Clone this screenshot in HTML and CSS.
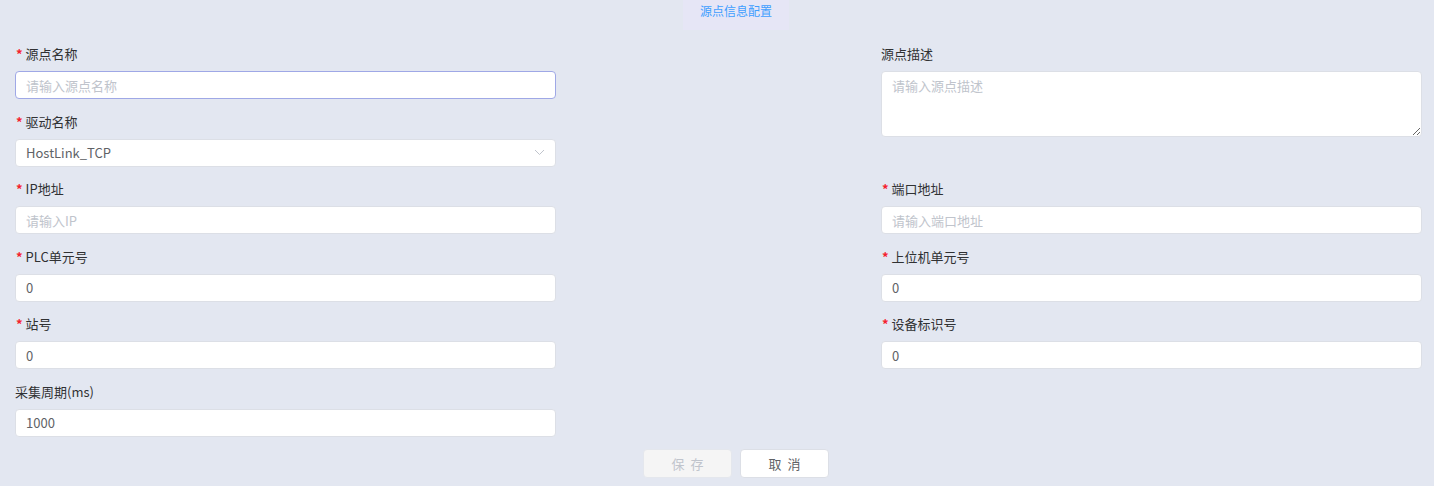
FILE: index.html
```html
<!DOCTYPE html>
<html lang="zh-CN">
  <head>
    <meta charset="UTF-8" />
    <meta name="viewport" content="width=device-width, initial-scale=1.0" />
    <title>源点信息配置</title>
    <link rel="stylesheet" href="styles.css">
  </head>
  <body>
    <header class="tabs">
      <span class="tab active">源点信息配置</span>
    </header>
    <main class="form">
      <div class="item">
        <label class="label required">源点名称</label>
        <input class="input focus" placeholder="请输入源点名称" />
      </div>
      <div class="item tall">
        <label class="label">源点描述</label>
        <textarea class="input area" placeholder="请输入源点描述"></textarea>
      </div>
      <div class="item">
        <label class="label required">驱动名称</label>
        <div class="input select">
          <span>HostLink_TCP</span>
          <svg width="11" height="7" viewBox="0 0 11 7"><path d="M1 1l4.5 4.5L10 1" fill="none" stroke="#c0c4cc" stroke-width="1"/></svg>
        </div>
      </div>
      <div class="item">
        <label class="label required">IP地址</label>
        <input class="input" placeholder="请输入IP" />
      </div>
      <div class="item">
        <label class="label required">端口地址</label>
        <input class="input" placeholder="请输入端口地址" />
      </div>
      <div class="item">
        <label class="label required">PLC单元号</label>
        <input class="input" value="0" />
      </div>
      <div class="item">
        <label class="label required">上位机单元号</label>
        <input class="input" value="0" />
      </div>
      <div class="item">
        <label class="label required">站号</label>
        <input class="input" value="0" />
      </div>
      <div class="item">
        <label class="label required">设备标识号</label>
        <input class="input" value="0" />
      </div>
      <div class="item">
        <label class="label">采集周期(ms)</label>
        <input class="input" value="1000" />
      </div>
    </main>
    <footer class="actions">
      <button class="btn" disabled>保存</button>
      <button class="btn">取消</button>
    </footer>
  </body>
</html>
```

FILE: styles.css
```css
/* styles.css */
body {
  margin: 0;
  background-color: #e3e7f1;
  font-family: "Noto Sans CJK SC", "Liberation Sans", sans-serif;
  font-size: 13px;
  color: #303133;
}

.tabs {
  display: flex;
  justify-content: center;
  padding-left: 38px;
}

.tab {
  width: 106px;
  height: 30px;
  line-height: 21px;
  text-align: center;
  font-size: 12px;
  color: #409eff;
  background-color: #e6e6f6;
}

.form {
  display: grid;
  grid-template-columns: 541px 541px;
  justify-content: space-between;
  row-gap: 12.5px;
  padding: 14px 12px 0 15px;
}

.item {
  display: flex;
  flex-direction: column;
  align-self: start;
}

.item.tall {
  grid-row: span 2;
}

.label {
  height: 20px;
  line-height: 20px;
  margin-bottom: 7px;
  color: #303133;
}

.label.required::before {
  content: "*";
  color: #f5222d;
  font-weight: bold;
  margin: 0 3px 0 1px;
}

.input {
  box-sizing: border-box;
  height: 28px;
  padding: 0 10px;
  border: 1px solid #dcdfe6;
  border-radius: 4px;
  background-color: #fff;
  font-family: inherit;
  font-size: 13px;
  color: #606266;
  outline: none;
}

.input::placeholder {
  color: #c0c4cc;
}

.input.focus {
  border-color: #9fa8e6;
}

.area {
  height: 66px;
  padding: 5px 10px;
  line-height: 18px;
  resize: vertical;
}

.select {
  display: flex;
  align-items: center;
  justify-content: space-between;
  padding-right: 10px;
}

.actions {
  display: flex;
  justify-content: center;
  gap: 8px;
  padding: 12px 0 0 38px;
}

.btn {
  width: 89px;
  height: 29px;
  padding: 0 0 0 6px;
  border: 1px solid #dcdfe6;
  border-radius: 4px;
  background-color: #fff;
  font-family: inherit;
  font-size: 13px;
  letter-spacing: 6px;
  color: #606266;
  cursor: pointer;
}

.btn:disabled {
  background-color: #f5f5f5;
  border-color: #e4e7ed;
  color: #c0c4cc;
  cursor: not-allowed;
}
```
